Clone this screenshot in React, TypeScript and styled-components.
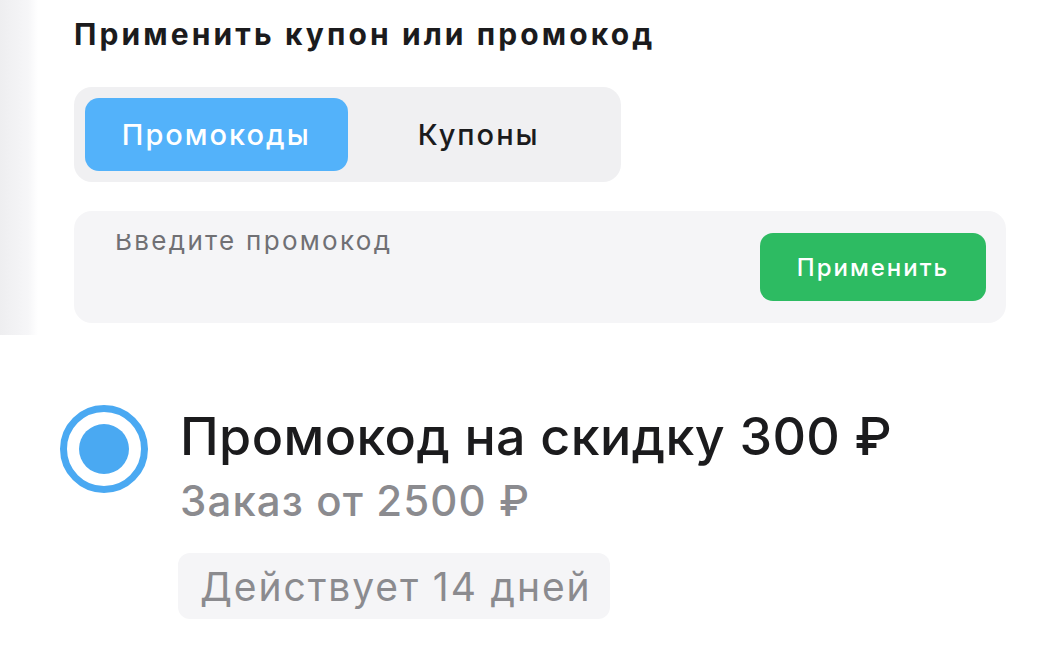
import styled, { createGlobalStyle } from "styled-components";

const GlobalStyle = createGlobalStyle`
  html, body {
    margin: 0;
    padding: 0;
    background: #ffffff;
  }
  body {
    font-family: Inter, "Noto Sans", "DejaVu Sans", sans-serif;
    color: #1b1b1d;
  }
  * {
    box-sizing: border-box;
  }
`;

const Page = styled.div`
  width: 1038px;
  height: 651px;
  overflow: hidden;
  background: #ffffff;
`;

const CouponPanel = styled.section`
  height: 335px;
  padding: 14px 32px 0 74px;
  background: linear-gradient(
    to right,
    #eeeef0 0px,
    #f6f6f8 28px,
    #ffffff 38px
  );
`;

const Title = styled.h2`
  margin: 0;
  font-size: 30px;
  line-height: 40px;
  font-weight: 700;
  letter-spacing: 3.1px;
  color: #1b1b1d;
`;

const Tabs = styled.div`
  display: flex;
  width: 547px;
  height: 95px;
  margin-top: 33px;
  padding: 11px;
  border-radius: 18px;
  background: #f0f0f2;
`;

const Tab = styled.button<{ $active?: boolean }>`
  flex: 1;
  border: none;
  border-radius: 14px;
  font-family: inherit;
  font-size: 29px;
  font-weight: 500;
  letter-spacing: 2px;
  background: ${(p) => (p.$active ? "#53b2fa" : "transparent")};
  color: ${(p) => (p.$active ? "#ffffff" : "#1b1b1d")};
  cursor: pointer;
`;

const CodeBox = styled.div`
  display: flex;
  justify-content: space-between;
  align-items: flex-start;
  width: 932px;
  height: 112px;
  margin-top: 29px;
  padding: 22px 20px 0 41px;
  border-radius: 18px;
  background: #f5f5f7;
`;

const LabelClip = styled.div`
  height: 20px;
  margin-top: 1px;
  overflow: hidden;
`;

const FieldLabel = styled.span`
  display: block;
  margin-top: -8px;
  font-size: 26px;
  line-height: 30px;
  font-weight: 400;
  letter-spacing: 2.3px;
  color: #707074;
`;

const ApplyButton = styled.button`
  width: 226px;
  height: 68px;
  border: none;
  border-radius: 13px;
  background: #2dbb62;
  color: #ffffff;
  font-family: inherit;
  font-size: 24px;
  font-weight: 500;
  letter-spacing: 2px;
  cursor: pointer;
`;

const Offer = styled.div`
  display: flex;
  align-items: flex-start;
  gap: 32px;
  padding: 70px 0 0 60px;
`;

const Radio = styled.span`
  display: flex;
  align-items: center;
  justify-content: center;
  flex: none;
  width: 88px;
  height: 88px;
  border-radius: 50%;
  border: 7px solid #4aa9f2;
  background: #ffffff;

  &::after {
    content: "";
    width: 50px;
    height: 50px;
    border-radius: 50%;
    background: #4aa9f2;
  }
`;

const OfferText = styled.div`
  display: flex;
  flex-direction: column;
  align-items: flex-start;
`;

const OfferTitle = styled.div`
  font-size: 52px;
  line-height: 64px;
  font-weight: 500;
  letter-spacing: 0.4px;
  color: #1b1b1d;
`;

const OfferCondition = styled.div`
  margin-top: 6px;
  font-size: 42px;
  line-height: 52px;
  font-weight: 500;
  letter-spacing: 1.1px;
  color: #8b8b8f;
`;

const Validity = styled.div`
  margin-top: 26px;
  margin-left: -2px;
  padding: 0 18px 0 22px;
  height: 66px;
  display: flex;
  align-items: center;
  border-radius: 12px;
  background: #f5f5f7;
  font-size: 39px;
  font-weight: 400;
  letter-spacing: 1.9px;
  color: #8b8b8f;
`;

export default function App() {
  return (
    <Page>
      <GlobalStyle />
      <CouponPanel>
        <Title>Применить купон или промокод</Title>
        <Tabs>
          <Tab $active>Промокоды</Tab>
          <Tab>Купоны</Tab>
        </Tabs>
        <CodeBox>
          <LabelClip>
            <FieldLabel>Введите промокод</FieldLabel>
          </LabelClip>
          <ApplyButton>Применить</ApplyButton>
        </CodeBox>
      </CouponPanel>
      <Offer>
        <Radio />
        <OfferText>
          <OfferTitle>Промокод на скидку 300 ₽</OfferTitle>
          <OfferCondition>Заказ от 2500 ₽</OfferCondition>
          <Validity>Действует 14 дней</Validity>
        </OfferText>
      </Offer>
    </Page>
  );
}
